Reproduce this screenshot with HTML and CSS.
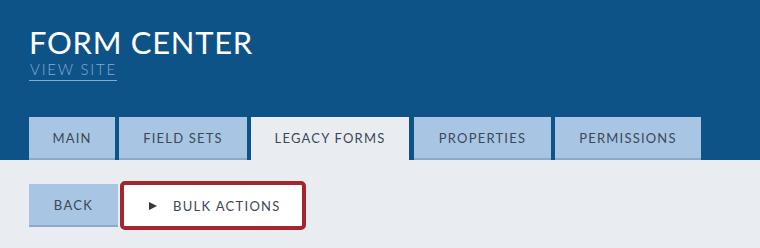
FILE: index.html
```html
<!DOCTYPE html>
<html>
<head>
<meta charset="utf-8">
<link rel="stylesheet" href="styles.css">
</head>
<body>
<header class="header">
  <h1 class="title">FORM CENTER</h1>
  <a class="view-site" href="#">VIEW SITE</a>
  <nav class="tabs">
    <a class="tab tab-main" href="#">MAIN</a>
    <a class="tab tab-fields" href="#">FIELD SETS</a>
    <a class="tab tab-legacy active" href="#">LEGACY FORMS</a>
    <a class="tab tab-props" href="#">PROPERTIES</a>
    <a class="tab tab-perms" href="#">PERMISSIONS</a>
  </nav>
</header>
<main class="content">
  <button class="btn btn-back">BACK</button>
  <button class="btn btn-bulk"><span class="tri"></span>BULK ACTIONS</button>
</main>
</body>
</html>
```
FILE: styles.css
```css
* { box-sizing: border-box; }
html, body { margin: 0; padding: 0; }
body {
  width: 760px;
  height: 248px;
  overflow: hidden;
  font-family: "Lato", "Open Sans", sans-serif;
  background: #e9edf1;
}
.header {
  background: #0d5388;
  height: 160px;
  padding: 24px 0 0 29px;
  display: flex;
  flex-direction: column;
  align-items: flex-start;
}
.title {
  margin: 0;
  font-size: 31px;
  font-weight: 400;
  line-height: 36px;
  letter-spacing: 0.7px;
  color: #ffffff;
}
.view-site {
  margin-top: 1px;
  font-size: 15px;
  font-weight: 300;
  line-height: 16px;
  letter-spacing: 1.8px;
  color: #84aad3;
  text-decoration: none;
  border-bottom: 1px solid #84aad3;
  padding: 0 0 3px 1px;
}
.tabs {
  display: flex;
  gap: 4px;
  margin-top: 36px;
  height: 43px;
}
.tab {
  display: flex;
  align-items: center;
  justify-content: center;
  background: #a8c5e3;
  border-bottom: 2px solid #8ea9c8;
  color: #3d4857;
  font-size: 13px;
  letter-spacing: 1.2px;
  text-decoration: none;
  padding-top: 1px;
}
.tab.active {
  background: #e9edf1;
  border-bottom-color: #e9edf1;
}
.tab-main { width: 86px; }
.tab-fields { width: 128px; }
.tab-legacy { width: 158px; }
.tab-props { width: 137px; margin-left: 1px; }
.tab-perms { width: 146px; }
.content {
  display: flex;
  align-items: center;
  padding: 21px 0 0 29px;
}
.btn {
  font-family: inherit;
  font-size: 13px;
  letter-spacing: 1.3px;
  color: #3d4857;
  border: none;
  cursor: pointer;
}
.btn-back {
  width: 89px;
  height: 43px;
  background: #a8c5e3;
  border-bottom: 2px solid #8ea9c8;
}
.btn-bulk {
  margin-left: 2px;
  width: 186px;
  height: 49px;
  background: #ffffff;
  border: 4px solid #a3262f;
  border-radius: 5px;
  display: flex;
  align-items: center;
  padding: 0 0 0 25px;
}
.tri {
  width: 0;
  height: 0;
  border-top: 4px solid transparent;
  border-bottom: 4px solid transparent;
  border-left: 8px solid #333a40;
  margin-right: 16px;
}
```
